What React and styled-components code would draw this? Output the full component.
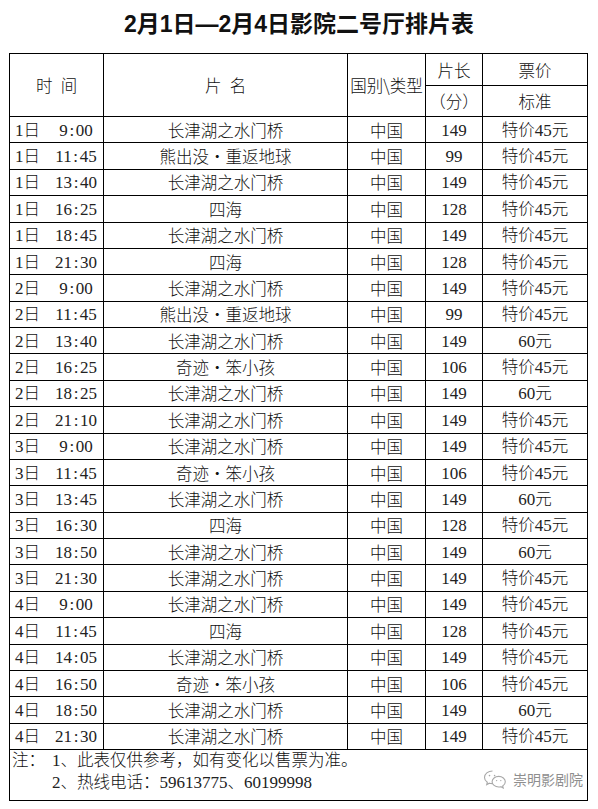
import React from "react";
import styled, { createGlobalStyle } from "styled-components";

const GlobalStyle = createGlobalStyle`
  html, body { margin: 0; padding: 0; background: #fff; }
  body { font-family: "Noto Sans CJK SC", sans-serif; color: #111; }
`;

const Page = styled.div`
  width: 598px;
  height: 809px;
  background: #fff;
  overflow: hidden;
`;

const Title = styled.h1`
  margin: 0 0 5px;
  text-align: center;
  line-height: 48px;
  font-size: 23px;
  font-weight: 700;
  font-family: "Liberation Sans", "Noto Sans CJK SC", sans-serif;
  color: #111;
`;

const Table = styled.table`
  border-collapse: collapse;
  table-layout: fixed;
  width: 579px;
  margin-left: 9px;
  font-size: 16.5px;
  font-weight: 300;
  color: #111;
`;

const Row = styled.tr`
  height: ${(p) => p.$h}px;
`;

const Cell = styled.td`
  border: 1px solid #000;
  padding: 0;
  text-align: center;
  vertical-align: middle;
  white-space: nowrap;
  line-height: 20px;
`;

const Num = styled.span`
  font-family: "Liberation Serif", serif;
  font-size: 17px;
  font-weight: 400;
  color: #222;
`;

const Colon = styled.span`
  display: inline-block;
  width: 8px;
  text-align: center;
`;

const Dot = styled.span`
  display: inline-block;
  width: 1em;
  text-align: center;
`;

const Spaced = styled.span`
  display: inline-block;
  width: 0.5em;
`;

const TimeCell = styled(Cell)`
  text-align: left;
`;

const TimeWrap = styled.div`
  display: flex;
  align-items: center;
  padding-left: 5px;
  padding-right: 4px;
`;

const Clock = styled.span`
  width: 46px;
  margin-left: auto;
  text-align: center;
`;

const NoteCell = styled(Cell)`
  text-align: left;
  vertical-align: top;
`;

const NoteBody = styled.div`
  position: relative;
  display: flex;
  padding-left: 2px;
  margin-top: -1px;
  height: 50px;
`;

const NoteLabel = styled.div`
  width: 40px;
  line-height: 21px;
`;

const NoteLines = styled.div`
  display: flex;
  flex-direction: column;
`;

const NoteLine = styled.div`
  line-height: 21px;
`;

const Watermark = styled.div`
  position: absolute;
  right: 4px;
  bottom: 10px;
  display: flex;
  align-items: center;
  gap: 6px;
  color: #8e8e8e;
  font-size: 14px;
  font-weight: 400;
  line-height: 20px;
`;

const rows = [
  ["1", "9:00", "长津湖之水门桥", "149", "特价45元"],
  ["1", "11:45", "熊出没·重返地球", "99", "特价45元"],
  ["1", "13:40", "长津湖之水门桥", "149", "特价45元"],
  ["1", "16:25", "四海", "128", "特价45元"],
  ["1", "18:45", "长津湖之水门桥", "149", "特价45元"],
  ["1", "21:30", "四海", "128", "特价45元"],
  ["2", "9:00", "长津湖之水门桥", "149", "特价45元"],
  ["2", "11:45", "熊出没·重返地球", "99", "特价45元"],
  ["2", "13:40", "长津湖之水门桥", "149", "60元"],
  ["2", "16:25", "奇迹·笨小孩", "106", "特价45元"],
  ["2", "18:25", "长津湖之水门桥", "149", "60元"],
  ["2", "21:10", "长津湖之水门桥", "149", "特价45元"],
  ["3", "9:00", "长津湖之水门桥", "149", "特价45元"],
  ["3", "11:45", "奇迹·笨小孩", "106", "特价45元"],
  ["3", "13:45", "长津湖之水门桥", "149", "60元"],
  ["3", "16:30", "四海", "128", "特价45元"],
  ["3", "18:50", "长津湖之水门桥", "149", "60元"],
  ["3", "21:30", "长津湖之水门桥", "149", "特价45元"],
  ["4", "9:00", "长津湖之水门桥", "149", "特价45元"],
  ["4", "11:45", "四海", "128", "特价45元"],
  ["4", "14:05", "长津湖之水门桥", "149", "特价45元"],
  ["4", "16:50", "奇迹·笨小孩", "106", "特价45元"],
  ["4", "18:50", "长津湖之水门桥", "149", "60元"],
  ["4", "21:30", "长津湖之水门桥", "149", "特价45元"],
];

function Film({ name }) {
  const parts = name.split("·");
  if (parts.length === 1) return name;
  return (
    <>
      {parts[0]}
      <Dot>·</Dot>
      {parts[1]}
    </>
  );
}

function Price({ value }) {
  const m = value.match(/^(\D*)(\d+)(\D*)$/);
  return (
    <>
      {m[1]}
      <Num>{m[2]}</Num>
      {m[3]}
    </>
  );
}

function Time({ value }) {
  const [h, mm] = value.split(":");
  return (
    <Num>
      {h}
      <Colon>:</Colon>
      {mm}
    </Num>
  );
}

function WeChatIcon() {
  return (
    <svg width="24" height="20" viewBox="0 0 24 20" fill="none" stroke="#a8a8a8" strokeWidth="1.1">
      <path d="M9.5 2C5 2 1.5 4.9 1.5 8.4c0 2 1.1 3.7 2.8 4.9L3.7 15.6l2.7-1.4c.9.3 1.9.4 2.9.4" />
      <path d="M15.7 7.4c-3.6 0-6.6 2.4-6.6 5.3s3 5.3 6.6 5.3c.8 0 1.5-.1 2.2-.3l2.3 1.3-.5-2c1.6-1 2.6-2.6 2.6-4.3 0-2.9-3-5.3-6.6-5.3z" />
      <circle cx="6.5" cy="6.6" r="0.8" fill="#a8a8a8" stroke="none" />
      <circle cx="11.6" cy="6.6" r="0.8" fill="#a8a8a8" stroke="none" />
      <circle cx="13.6" cy="11.6" r="0.7" fill="#a8a8a8" stroke="none" />
      <circle cx="17.8" cy="11.6" r="0.7" fill="#a8a8a8" stroke="none" />
    </svg>
  );
}

export default function App() {
  return (
    <Page>
      <GlobalStyle />
      <Title>2月1日—2月4日影院二号厅排片表</Title>
      <Table>
        <colgroup>
          <col style={{ width: 94 }} />
          <col style={{ width: 244 }} />
          <col style={{ width: 78 }} />
          <col style={{ width: 57 }} />
          <col style={{ width: 105 }} />
        </colgroup>
        <tbody>
          <Row $h={32}>
            <Cell rowSpan={2}>
              时<Spaced />间
            </Cell>
            <Cell rowSpan={2}>
              片<Spaced />名
            </Cell>
            <Cell rowSpan={2}>国别\类型</Cell>
            <Cell>片长</Cell>
            <Cell>票价</Cell>
          </Row>
          <Row $h={31}>
            <Cell>（分）</Cell>
            <Cell>标准</Cell>
          </Row>
          {rows.map(([day, time, film, len, price], i) => (
            <Row $h={26.375} key={i}>
              <TimeCell>
                <TimeWrap>
                  <span>
                    <Num>{day}</Num>日
                  </span>
                  <Clock>
                    <Time value={time} />
                  </Clock>
                </TimeWrap>
              </TimeCell>
              <Cell>
                <Film name={film} />
              </Cell>
              <Cell>中国</Cell>
              <Cell>
                <Num>{len}</Num>
              </Cell>
              <Cell>
                <Price value={price} />
              </Cell>
            </Row>
          ))}
          <Row $h={51}>
            <NoteCell colSpan={5}>
              <NoteBody>
                <NoteLabel>注：</NoteLabel>
                <NoteLines>
                  <NoteLine>
                    <Num>1</Num>、此表仅供参考，如有变化以售票为准。
                  </NoteLine>
                  <NoteLine>
                    <Num>2</Num>、热线电话：<Num>59613775</Num>、<Num>60199998</Num>
                  </NoteLine>
                </NoteLines>
                <Watermark>
                  <WeChatIcon />
                  <span>崇明影剧院</span>
                </Watermark>
              </NoteBody>
            </NoteCell>
          </Row>
        </tbody>
      </Table>
    </Page>
  );
}
